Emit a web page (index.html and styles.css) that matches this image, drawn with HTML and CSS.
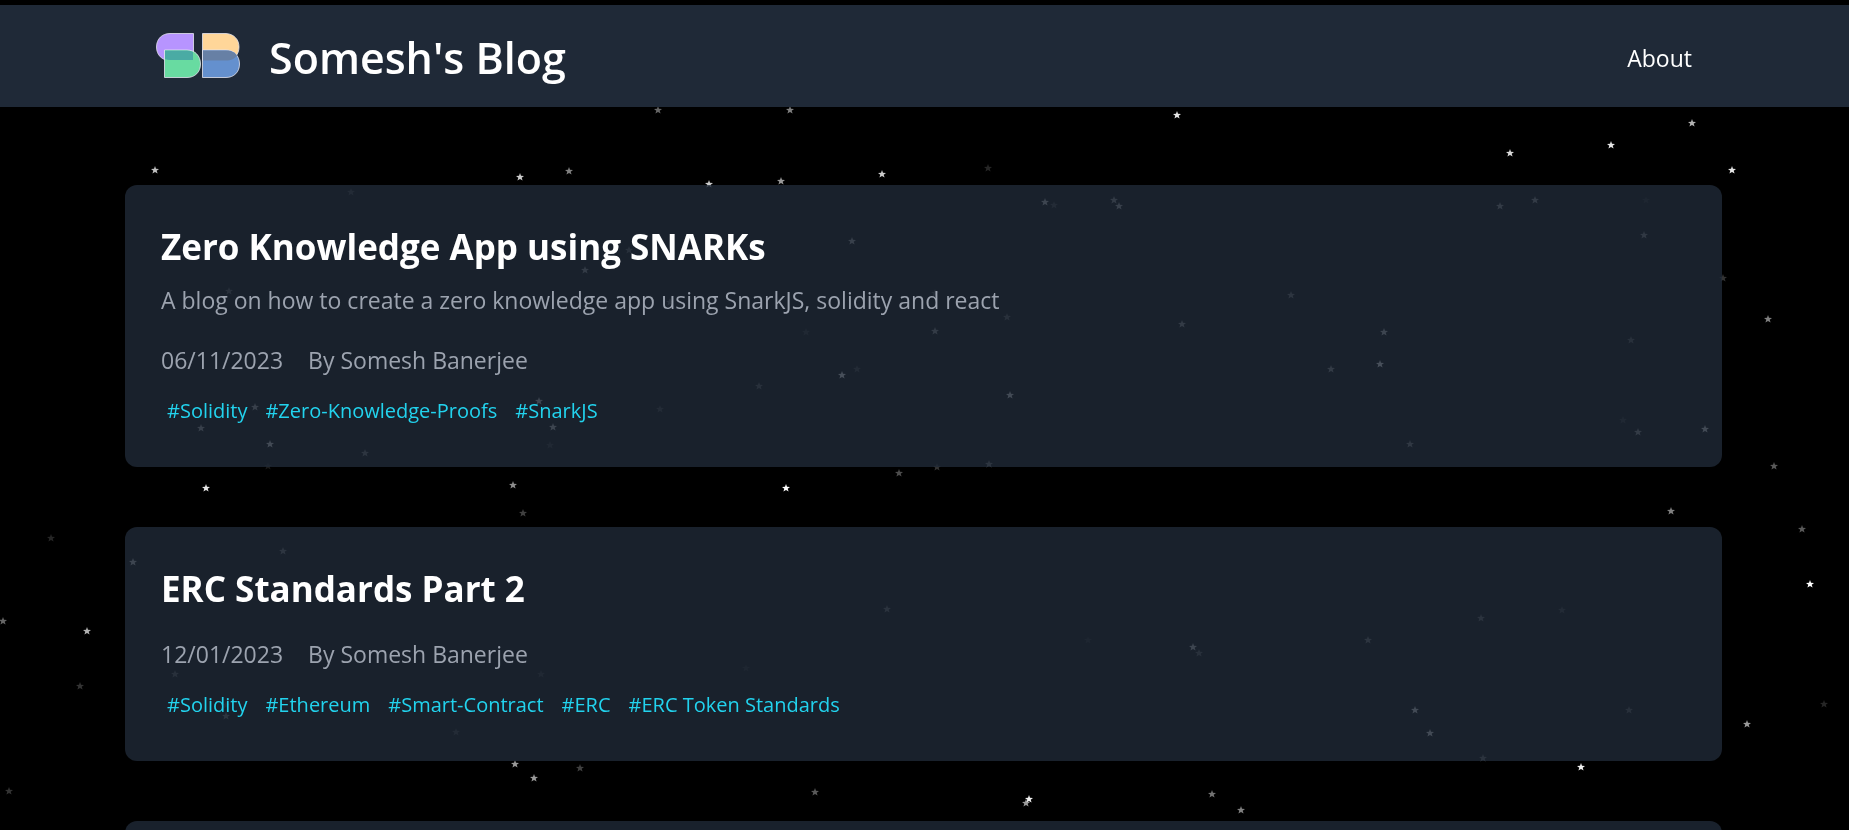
FILE: index.html
```html
<!DOCTYPE html>
<html lang="en">
<head>
<meta charset="utf-8">
<title>Somesh's Blog</title>
<link rel="stylesheet" href="styles.css">
</head>
<body>
<svg class="sky" id="sky" aria-hidden="true">
  <symbol id="star" viewBox="-5 -5 10 10"><path d="M0-4 1-1.3 4-1.1 1.7.7 2.6 3.6 0 2-2.6 3.6-1.7.7-4-1.1-1-1.3Z"/></symbol>
</svg>
<header class="header">
  <a class="brand" href="#">
    <svg class="logo" viewBox="0 0 86 50" aria-hidden="true">
      <g stroke="#e4e4f0" stroke-width=".8">
        <path fill="#b794ff" d="M37.500.5H14C6 .5.500 6 .500 14S6 27.500 14 27.500h23.500z"/>
        <path fill="#ffd699" d="M46.500.500H70c8 .500 13 6 13 13.500S78 27.500 70 27.500H46.500z"/>
        <path fill="#68dba1" d="M8.500 17H31c8 0 13.500 6 13.500 14S39 44.500 31 44.500H8.500z"/>
        <path fill="#6490ce" d="M46.500 17H70c8 0 13.500 6 13.500 14S78 44.500 70 44.500H46.500z"/>
      </g>
      <path fill="#4aaba4" d="M9 17.500h22q4 0 6 1.500v8H14q-3 0-5-1z"/>
      <path fill="#6780a5" d="M47 17.500h23c6 0 9 2 11 5-2 3-6 5-11 5H47z"/>
    </svg>
    <span class="brand-name">Somesh's Blog</span>
  </a>
  <nav><a class="nav-link" href="#about">About</a></nav>
</header>
<main class="posts">
  <article class="card">
    <h2 class="title">Zero Knowledge App using SNARKs</h2>
    <p class="summary">A blog on how to create a zero knowledge app using SnarkJS, solidity and react</p>
    <p class="meta"><span>06/11/2023</span><span>By Somesh Banerjee</span></p>
    <div class="tags"><a href="#solidity">#Solidity</a><a href="#zkp">#Zero-Knowledge-Proofs</a><a href="#snarkjs">#SnarkJS</a></div>
  </article>
  <article class="card">
    <h2 class="title">ERC Standards Part 2</h2>
    <p class="meta"><span>12/01/2023</span><span>By Somesh Banerjee</span></p>
    <div class="tags"><a href="#solidity">#Solidity</a><a href="#ethereum">#Ethereum</a><a href="#smart-contract">#Smart-Contract</a><a href="#erc">#ERC</a><a href="#erc-token">#ERC Token Standards</a></div>
  </article>
  <article class="card"></article>
</main>
<script src="script.js"></script>
</body>
</html>
```
FILE: styles.css
```css
* { box-sizing: border-box; margin: 0; padding: 0; }
html { background: #000; scrollbar-width: none; }
body {
  font-family: "Open Sans", "Noto Sans", sans-serif;
  font-size: 23px;
  line-height: 36px;
  color: #fff;
  border-top: 5px solid #000;
}
a { color: inherit; text-decoration: none; }
.sky { position: fixed; inset: 0; width: 100%; height: 100%; z-index: -1; fill: #fff; }
.header {
  position: relative;
  display: flex;
  align-items: center;
  justify-content: space-between;
  height: 102px;
  padding: 4px 157px 0 156px;
  background: #1f2937;
}
.brand { display: flex; align-items: center; gap: 27px; }
.logo { width: 86px; height: 50px; }
.brand-name { font-size: 43px; line-height: 60px; font-weight: 600; }
.posts {
  display: flex;
  flex-direction: column;
  gap: 60px;
  padding: 78px 127px 60px 125px;
}
.card { padding: 36px; border-radius: 12px; background: rgba(31, 41, 55, 0.8); }
.title { font-size: 35px; line-height: 52px; font-weight: 700; }
.summary { color: #9ca3af; margin-top: 9px; }
.meta { display: flex; gap: 25px; margin: 21px 0 13px; color: #9ca3af; }
.summary + .meta { margin-top: 24px; }
.tags { display: flex; flex-wrap: wrap; gap: 18px; padding-left: 6px; font-size: 20px; line-height: 40px; color: #22d3ee; }
```
FILE: script.js
```js
// Each star: x, y, brightness
const stars = [
  [155,170,.75],[520,177,.8],[569,171,.5],[351,192,.2],[658,110,.4],[790,110,.5],
  [709,184,.8],[781,181,.6],[882,174,.8],[988,168,.15],[1045,202,.7],[1054,205,.2],
  [852,241,.6],[629,250,.3],[670,302,.3],[806,332,.15],[935,331,.5],[1007,317,.3],
  [935,293,.25],[842,375,.9],[857,369,.2],[759,386,.3],[660,409,.2],[1010,395,.8],
  [989,464,.4],[937,467,.2],[1177,115,.9],[1114,200,.5],[1119,206,.6],
  [1510,153,.85],[1611,145,.9],[1692,123,.7],[1732,170,.9],[1500,206,.5],[1535,200,.5],
  [1646,200,.1],[1644,235,.45],[1723,278,.2],[1291,295,.4],[1182,324,.5],[1384,332,.7],
  [1380,364,.9],[1331,369,.5],[1631,340,.3],[1768,319,.5],[1638,432,.5],[1705,429,.8],
  [1623,420,.15],[1410,444,.45],[1774,466,.35],[1671,511,.5],[1802,529,.35],
  [585,270,.5],[229,291,.3],[255,407,.6],[201,428,.6],[270,444,.8],[365,453,.4],
  [539,401,.7],[553,427,.7],[550,445,.15],[268,466,.1],[206,488,.9],[513,485,.55],
  [523,513,.25],[283,551,.4],[133,562,.7],[175,674,.3],[226,716,.4],[226,705,.2],
  [541,674,.15],[456,732,.2],[515,764,.6],[534,778,.6],[580,768,.25],[786,488,1],
  [899,473,.3],[887,609,.35],[746,668,.1],[1088,640,.1],[1193,647,.7],[1199,653,.3],
  [815,792,.35],[1029,799,.95],[1026,803,.6],[1810,584,1],[1824,704,.15],[1747,724,.6],
  [1481,618,.35],[1562,610,.2],[1368,640,.4],[1415,710,.8],[1430,733,.8],[1629,710,.3],
  [1483,758,.35],[1581,767,.95],[1212,794,.45],[1241,810,.5],[51,538,.15],[3,621,.4],
  [87,631,.7],[80,686,.2],[9,791,.2]
];
const sky = document.getElementById("sky");
for (const [x, y, o] of stars) {
  const use = document.createElementNS("http://www.w3.org/2000/svg", "use");
  use.setAttribute("href", "#star");
  use.setAttribute("x", x - 5);
  use.setAttribute("y", y - 5);
  use.setAttribute("width", 10);
  use.setAttribute("height", 10);
  use.setAttribute("opacity", o);
  sky.appendChild(use);
}
```
